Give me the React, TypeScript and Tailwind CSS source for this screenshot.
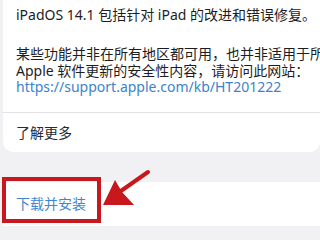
import React from "react";

const font = {
  fontFamily: '"Noto Sans", "Noto Sans CJK SC", sans-serif',
};

export default function App() {
  return (
    <div
      className="relative w-[320px] h-[240px] overflow-hidden bg-[#f1f1f4] text-[14px] text-[#1d1d1f]"
      style={font}
    >
      {/* release notes card */}
      <div className="ml-[3px] bg-white rounded-b-[10px]">
        <div className="pl-[13px] pt-[7px] pb-[16px] leading-[16.5px] whitespace-nowrap">
          <p>iPadOS 14.1 包括针对 iPad 的改进和错误修复。</p>
          <p className="mt-[22.5px]">
            某些功能并非在所有地区都可用，也并非适用于所
            <br />
            Apple 软件更新的安全性内容，请访问此网站：
            <br />
            <span className="text-[#3b83cc]">https://support.apple.com/kb/HT201222</span>
          </p>
        </div>
        <div className="h-px bg-[#e3e3e7]" />
        <div className="h-[39px] flex items-center pl-[13px] text-[#2a2a2c]">了解更多</div>
      </div>

      {/* download row */}
      <div className="mt-[30px] ml-[3px] h-[44px] bg-white flex items-center pl-[13px] text-[#3f87d2]">
        下载并安装
      </div>

      {/* red highlight */}
      <div className="absolute left-[2px] top-[177px] w-[99px] h-[46px] border-4 border-[#c8171d]" />
      <svg className="absolute left-0 top-0" width="320" height="240" viewBox="0 0 320 240">
        <line x1="148" y1="172" x2="118" y2="193" stroke="#c8171d" strokeWidth="4" strokeLinecap="round" />
        <polygon points="103,205 115,180 122,192 134,205" fill="#c8171d" />
      </svg>
    </div>
  );
}
